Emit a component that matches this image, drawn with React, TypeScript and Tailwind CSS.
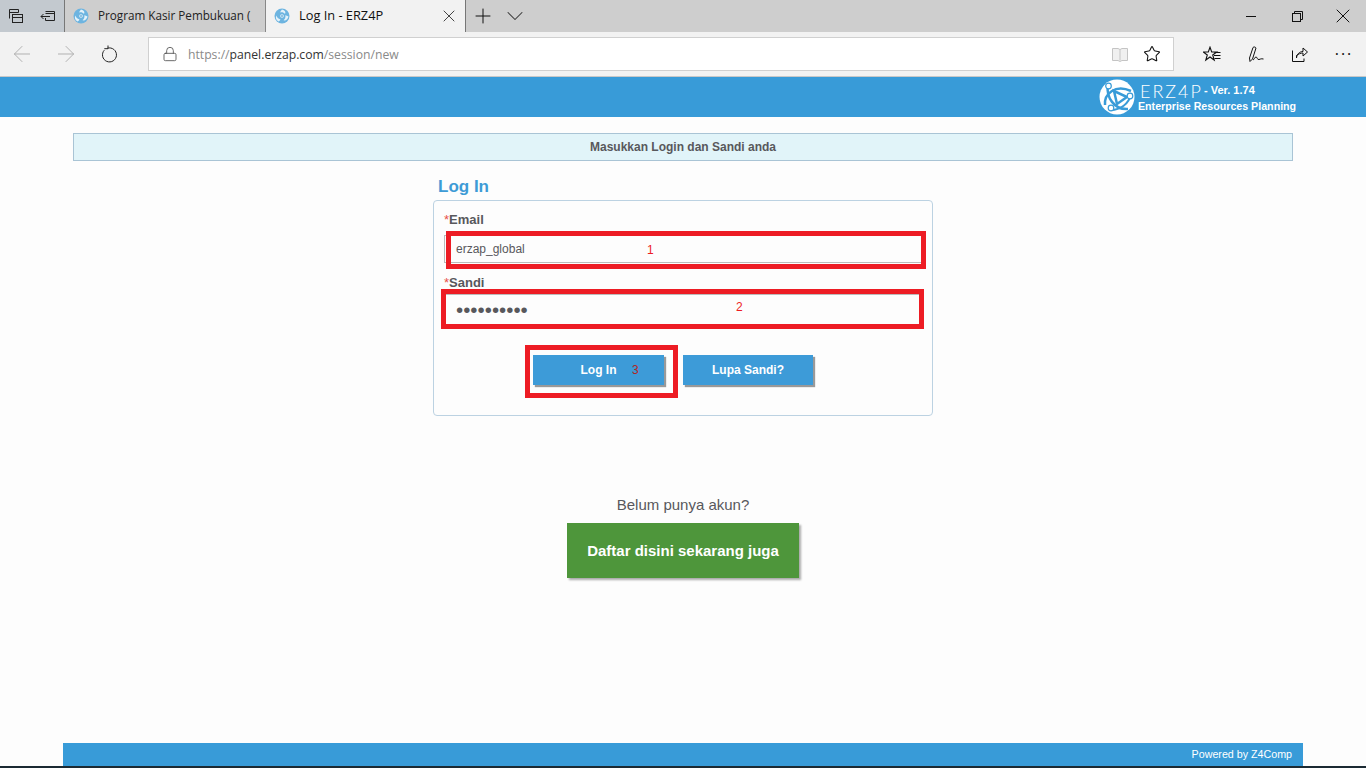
import {ArrowLeft, ArrowRight, ChevronDown, Lock, Plus, Star, X} from "lucide-react";

function EdgeFavicon() {
	return (
		<svg width="16" height="16" viewBox="0 0 16 16">
			<circle cx="8" cy="8" r="7.500" fill="#6db4e0" />
			<path d="M8 1.500c3 .5 4 2.500 3 4.500-1-1.500-3-2-5-1.500C6.500 3.500 7 2.500 8 1.500z" fill="#e4f2fa" />
			<path d="M14.500 8.500c-.5 2.800-2.800 4.500-5 3.800 1.500-1 2.300-2.800 1.800-5 1 .2 2.200.5 3.200 1.200z" fill="#e4f2fa" />
			<path d="M4.500 13.500c-2.500-1.500-3.300-4-2-6 .3 1.800 1.800 3.400 4 4-.5.900-1.100 1.500-2 2z" fill="#e4f2fa" />
			<circle cx="8" cy="8" r="1.800" fill="#e4f2fa" />
			<circle cx="8" cy="8" r=".8" fill="#2f86bf" />
		</svg>
	);
}

function TabsIcon() {
	return (
		<svg width="16" height="16" viewBox="0 0 16 16" fill="none" stroke="#222" strokeWidth="1">
			<path d="M1.500 10.500v-9h9v3" />
			<path d="M1.500 4.500h9" />
			<rect x="4.500" y="6.500" width="10" height="8" fill="none" />
			<path d="M4.500 9.500h10" />
		</svg>
	);
}

function SetAsideIcon() {
	return (
		<svg width="16" height="14" viewBox="0 0 16 14" fill="none" stroke="#222" strokeWidth="1">
			<path d="M5.500 2.500h9v9h-9v-2.500" />
			<path d="M5.500 4.500h9" />
			<path d="M10 7.500H1M3.500 5l-2.500 2.500 2.500 2.500" />
		</svg>
	);
}

function RefreshIcon() {
	return (
		<svg width="18" height="18" viewBox="0 0 18 18" fill="none" stroke="#222" strokeWidth="1">
			<path d="M6.500 3.200A7 7 0 1 1 3.300 5.200" />
			<path d="M7 .5v3.200H3.300" />
		</svg>
	);
}

function FavoritesIcon() {
	return (
		<svg width="18" height="17" viewBox="0 0 18 17" fill="none" stroke="#111" strokeWidth="1.100">
			<path d="M7 1.200l1.700 4.800h5l-4 3 1.500 5-4.200-3-4.200 3 1.500-5-4-3h5z" />
			<path d="M11.500 6.500h6M11 9.500h6.500M11.500 12.500h6" />
		</svg>
	);
}

function PenIcon() {
	return (
		<svg width="16" height="17" viewBox="0 0 16 17" fill="none" stroke="#111" strokeWidth="1">
			<path d="M5 1.500c1-1 2.500-.5 3 .5l-3.500 11-2.500 2.500-.5-3.500z" />
			<path d="M5 14c1.500-.5 1.500-3 3-3s1 3 3 2.500 1.500-1 4.500-.5" />
		</svg>
	);
}

function ShareIcon() {
	return (
		<svg width="16" height="16" viewBox="0 0 16 16" fill="none" stroke="#111" strokeWidth="1">
			<path d="M.5 4.500v11h11.500v-3" />
			<path d="M4.500 12c.5-4 3-6.500 6.500-6.500v-3.500l4.500 4-4.500 4v-3c-2.500 0-4.500 1-6.500 2.500z" />
		</svg>
	);
}

function ReadingIcon() {
	return (
		<svg width="16" height="15" viewBox="0 0 16 15" fill="none" stroke="#c4c4c4" strokeWidth="1">
			<path d="M.5 1.500h5.500l2 1 2-1h5.500v12h-5.500l-2 1-2-1h-5.500z" fill="#f0f0f0" />
			<path d="M8 2.500v11" />
		</svg>
	);
}

function ErzapLogo() {
	return (
		<svg width="36" height="36" viewBox="0 0 36 36">
			<circle cx="18" cy="18" r="17.500" fill="#fff" />
			<path d="M6 26C5 15 16 5 32 12" fill="none" stroke="#389bd8" strokeWidth="2.500" />
			<path d="M9 6c-2 12 6 25 20 24" fill="none" stroke="#389bd8" strokeWidth="2.500" />
			<path d="M12 31C21 31 30 25 32 15" fill="none" stroke="#389bd8" strokeWidth="2" />
			<path d="M15 12l3 13 10-7z" fill="none" stroke="#389bd8" strokeWidth="2.500" />
			<circle cx="9.500" cy="7" r="2.800" fill="#fff" stroke="#389bd8" strokeWidth="1.200" />
			<circle cx="31" cy="17" r="2.800" fill="#fff" stroke="#389bd8" strokeWidth="1.200" />
			<circle cx="12" cy="29" r="2.800" fill="#fff" stroke="#389bd8" strokeWidth="1.200" />
		</svg>
	);
}

function BrowserChrome() {
	return (
		<div className="shrink-0 border-b border-[#c8c8c8]">
			<div className="flex h-8 bg-[#cecece]">
				<div className="flex w-[65px] items-center border-r border-[#777] bg-[#c3c9cf]">
					<div className="flex w-8 justify-center"><TabsIcon /></div>
					<div className="flex w-8 justify-center"><SetAsideIcon /></div>
				</div>
				<div className="flex w-[201px] items-center gap-[9px] border-r border-[#888] pl-2 text-[11.700px] text-[#222]">
					<EdgeFavicon />
					<span className="whitespace-nowrap">Program Kasir Pembukuan (</span>
				</div>
				<div className="flex w-[200px] items-center gap-[9px] border-r border-[#777] bg-[#f2f2f2] pl-2 text-[12.800px] text-[#111]">
					<EdgeFavicon />
					<span className="flex-1">Log In - ERZ4P</span>
					<X className="mr-1.5 h-5 w-5 text-[#444]" strokeWidth={1.2} />
				</div>
				<div className="flex w-[34px] items-center justify-center">
					<Plus className="h-6 w-6 text-[#111]" strokeWidth={1} />
				</div>
				<div className="flex w-[30px] items-center justify-center">
					<ChevronDown className="h-7 w-7 text-[#333]" strokeWidth={0.9} />
				</div>
				<div className="ml-auto flex">
					<div className="flex w-[46px] items-center justify-center">
						<div className="h-px w-2.5 bg-[#111]" />
					</div>
					<div className="flex w-[46px] items-center justify-center">
						<svg width="11" height="11" viewBox="0 0 11 11" fill="none" stroke="#111" strokeWidth="1">
							<rect x=".5" y="2.500" width="8" height="8" />
							<path d="M2.500 2.500v-2h8v8h-2" />
						</svg>
					</div>
					<div className="flex w-[46px] items-center justify-center">
						<X className="h-6 w-6 text-[#111]" strokeWidth={1} />
					</div>
				</div>
			</div>
			<div className="flex h-11 items-center bg-[#f2f2f2]">
				<div className="flex w-11 justify-center"><ArrowLeft className="h-[26px] w-[26px] text-[#b0b0b0]" strokeWidth={0.9} /></div>
				<div className="flex w-11 justify-center"><ArrowRight className="h-[26px] w-[26px] text-[#b0b0b0]" strokeWidth={0.9} /></div>
				<div className="flex w-11 justify-center"><RefreshIcon /></div>
				<div className="ml-4 mr-4 flex h-[34px] flex-1 items-center border border-[#d0d0d0] bg-white pl-[13px] pr-[12px]">
					<Lock className="h-4 w-4 text-[#555]" strokeWidth={1.3} />
					<span className="ml-[10px] flex-1 pt-[2px] text-[12.200px] text-[#8a8a8a]">
						https://<span className="text-[#333]">panel.erzap.com</span>/session/new
					</span>
					<ReadingIcon />
					<Star className="ml-[15px] h-[18px] w-[18px] text-[#111]" strokeWidth={1.4} />
				</div>
				<div className="flex w-[176px]">
					<div className="flex w-11 justify-center"><FavoritesIcon /></div>
					<div className="flex w-11 justify-center"><PenIcon /></div>
					<div className="flex w-11 justify-center"><ShareIcon /></div>
					<div className="flex w-11 justify-center text-base leading-none tracking-[2px] text-[#111]">···</div>
				</div>
			</div>
		</div>
	);
}

export default function App() {
	return (
		<div className="flex h-[768px] w-[1366px] flex-col overflow-hidden bg-[#fdfdfd] font-['Liberation_Sans',sans-serif] text-[#58585c]">
			<div className="font-['Open_Sans',sans-serif]">
				<BrowserChrome />
			</div>

			<div className="flex h-10 shrink-0 items-center justify-end bg-[#389bd8] pr-[70px] text-white">
				<ErzapLogo />
				<div className="ml-[3px] w-[158px] font-bold">
					<div className="flex h-[19px] items-center">
						<span className="ml-[2px] w-[60px] font-['Lato',sans-serif] text-[18px] leading-none font-light tracking-[2px]">ERZ4P</span>
						<span className="ml-[4px] text-[11px]">- Ver. 1.74</span>
					</div>
					<div className="text-[10.660px] leading-[13px] whitespace-nowrap">Enterprise Resources Planning</div>
				</div>
			</div>

			<div className="mx-[73px] mt-4 flex h-[28px] shrink-0 items-center justify-center border border-[#a9c4d5] bg-[#e1f4f9] text-xs font-bold">
				Masukkan Login dan Sandi anda
			</div>

			<div className="mx-auto mt-4 w-[500px] shrink-0">
				<h1 className="h-[23px] pl-[5px] text-[17px] leading-[19px] font-bold text-[#3d9bd6]">Log In</h1>
				<div className="relative h-[216px] rounded-sm border border-[#bcd2e2] px-2.5 pt-[11px]">
					<label className="block h-4 text-[13px] leading-4 font-bold"><span className="font-normal text-[#e8504a]">*</span>Email</label>
					<input
						readOnly
						value="erzap_global"
						className="mt-[7px] block h-[28px] w-[479px] border border-[#bbb] pl-[11px] text-xs text-[#58585c] outline-none"
					/>
					<label className="mt-[12px] block h-4 text-[13px] leading-4 font-bold"><span className="font-normal text-[#e8504a]">*</span>Sandi</label>
					<input
						readOnly
						type="password"
						value="erzap12345"
						className="mt-[3px] block h-[31px] w-[479px] border border-[#bbb] pl-[11px] text-[20.500px] text-[#58585c] outline-none"
					/>
					<div className="mt-[30px] flex justify-center gap-[19px] pr-[20px]">
						<button className="h-[30px] w-[131px] bg-[#3d9bd8] text-xs font-bold text-white shadow-[2px_2px_1px_#999]">Log In</button>
						<button className="h-[30px] w-[130px] bg-[#3d9bd8] text-xs font-bold text-white shadow-[2px_2px_1px_#999]">Lupa Sandi?</button>
					</div>

					{/* annotations drawn over the form */}
					<div className="absolute top-[30px] left-[12px] h-[38px] w-[480px] border-[5px] border-[#ed1c24]">
						<span className="absolute top-[6px] left-[196px] text-xs text-[#ed1c24]">1</span>
					</div>
					<div className="absolute top-[88px] left-[7px] h-[40px] w-[483px] border-[5px] border-[#ed1c24]">
						<span className="absolute top-[5px] left-[290px] text-xs text-[#ed1c24]">2</span>
					</div>
					<div className="absolute top-[144px] left-[91px] h-[53px] w-[153px] border-[5px] border-[#ed1c24]">
						<span className="absolute top-[12px] left-[102px] text-xs text-[#b3261e]">3</span>
					</div>
				</div>
			</div>

			<div className="mt-[79px] shrink-0 text-center text-[15px] leading-[20px]">Belum punya akun?</div>
			<div className="mt-[8px] flex shrink-0 justify-center">
				<button className="h-[55px] w-[232px] bg-[#4e963b] pt-0.5 text-[15px] font-bold text-white shadow-[2px_2px_2px_#aaa]">
					Daftar disini sekarang juga
				</button>
			</div>

			<div className="mx-[63px] mt-auto flex h-[23px] shrink-0 items-center justify-end bg-[#389bd8] pr-[11px] pb-px text-[10.700px] text-white">
				Powered by Z4Comp
			</div>
			<div className="h-0.5 shrink-0 bg-[#1b2a33]" />
		</div>
	);
}
